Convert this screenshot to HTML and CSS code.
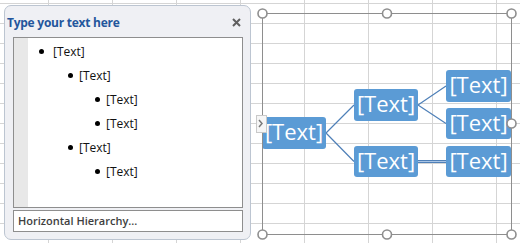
FILE: index.html
```html
<!DOCTYPE html>
<html lang="en">
  <head>
    <meta charset="UTF-8" />
    <title>SmartArt text pane</title>
    <link rel="stylesheet" href="styles.css">
  </head>
  <body>
    <div class="pane">
      <div class="pane-head">
        <span class="pane-title">Type your text here</span>
        <svg class="pane-close" width="9" height="9" viewBox="0 0 9 9">
          <path d="M1 1 L8 8 M8 1 L1 8" stroke="#5f5f5f" stroke-width="2" />
        </svg>
      </div>
      <div class="pane-body">
        <div class="pane-list">
          <div class="gutter"></div>
          <ul class="bullets">
            <li class="lvl1">[Text]</li>
            <li class="lvl2">[Text]</li>
            <li class="lvl3">[Text]</li>
            <li class="lvl3">[Text]</li>
            <li class="lvl2">[Text]</li>
            <li class="lvl3">[Text]</li>
          </ul>
        </div>
        <div class="pane-foot">Horizontal Hierarchy...</div>
      </div>
    </div>

    <svg class="diagram" width="269" height="243" viewBox="251 0 269 243">
      <!-- connectors -->
      <g class="links">
        <path d="M326 133 L354 105 M326 133 L354 161.5" />
        <path d="M418 105 L446 86 M418 105 L446 123.5" />
        <path d="M418 160.5 L446 160.5 M418 162.5 L446 162.5" />
      </g>
      <path class="link-fill" d="M418 161.5 L446 161.5" />

      <!-- nodes -->
      <g class="node">
        <rect x="262" y="117" width="64" height="32" rx="3" />
        <text x="294" y="140">[Text]</text>
      </g>
      <g class="node">
        <rect x="354" y="89" width="64" height="32" rx="3" />
        <text x="386" y="112">[Text]</text>
      </g>
      <g class="node">
        <rect x="354" y="146" width="64" height="31" rx="3" />
        <text x="386" y="169">[Text]</text>
      </g>
      <g class="node">
        <rect x="446" y="70" width="65" height="32" rx="3" />
        <text x="478.5" y="93">[Text]</text>
      </g>
      <g class="node">
        <rect x="446" y="108" width="65" height="31" rx="3" />
        <text x="478.5" y="131">[Text]</text>
      </g>
      <g class="node">
        <rect x="446" y="146" width="65" height="31" rx="3" />
        <text x="478.5" y="169">[Text]</text>
      </g>

      <!-- selection frame -->
      <rect class="frame" x="262.5" y="13.5" width="249" height="221" />
      <g class="handle">
        <circle cx="262.5" cy="13.5" r="4.5" />
        <circle cx="387" cy="13.5" r="4.5" />
        <circle cx="511.5" cy="13.5" r="4.5" />
        <circle cx="511.5" cy="123.5" r="4.5" />
        <circle cx="262.5" cy="234.5" r="4.5" />
        <circle cx="387" cy="234.5" r="4.5" />
        <circle cx="511.5" cy="234.5" r="4.5" />
      </g>

      <!-- text pane toggle -->
      <rect class="tab" x="256.5" y="115.5" width="10" height="17" />
      <path class="tab-arrow" d="M259 120 L262 123.5 L259 127" />
    </svg>
  </body>
</html>
```

FILE: styles.css
```css
* {
  box-sizing: border-box;
}

body {
  margin: 0;
  width: 520px;
  height: 243px;
  overflow: hidden;
  display: flex;
  align-items: flex-start;
  font-family: "Open Sans", "Noto Sans", sans-serif;
  background-color: #fff;
  background-image:
    linear-gradient(to right, #d5d5d5 1px, transparent 1px),
    linear-gradient(to bottom, #d5d5d5 1px, transparent 1px);
  background-size: 64px 100%, 100% 20px;
  background-position: 48px 0, 0 3px;
}

.pane {
  flex: none;
  width: 247px;
  height: 235px;
  margin: 5px 0 0 4px;
  background: #eff0f4;
  border: 1px solid #bcc5d1;
  border-radius: 7px;
}

.pane-head {
  height: 31px;
  display: flex;
  align-items: center;
  justify-content: space-between;
  padding: 1px 9px 0 2px;
}

.pane-title {
  font-size: 12px;
  font-weight: 700;
  letter-spacing: -0.25px;
  color: #24569c;
}

.pane-body {
  padding: 0 7px 0 8px;
}

.pane-list {
  height: 171px;
  display: flex;
  background: #fff;
  border: 1px solid #8e8e8e;
}

.gutter {
  width: 14px;
  background: #e8e8e8;
}

.bullets {
  flex: 1;
  list-style: none;
  margin: 0;
  padding: 1px 0 0 0;
}

.bullets li {
  height: 24px;
  display: flex;
  align-items: center;
  font-size: 12px;
  color: #111;
}

.bullets li::before {
  content: "";
  width: 5px;
  height: 5px;
  border-radius: 50%;
  background: #000;
}

.bullets .lvl1 {
  padding-left: 11px;
}

.bullets .lvl1::before {
  margin-right: 9px;
}

.bullets .lvl2 {
  padding-left: 40px;
}

.bullets .lvl3 {
  padding-left: 67px;
}

.bullets .lvl2::before,
.bullets .lvl3::before {
  margin-right: 6px;
}

.pane-foot {
  height: 22px;
  margin-top: 2px;
  padding-left: 4px;
  line-height: 20px;
  font-size: 11px;
  font-weight: 600;
  color: #3e3e3e;
  background: #fff;
  border: 1px solid #8e8e8e;
}

.diagram {
  flex: none;
  display: block;
}

.links path {
  stroke: #4f80b8;
  stroke-width: 1.2;
  fill: none;
}

.link-fill {
  stroke: #a9c4e4;
  stroke-width: 1;
}

.node rect {
  fill: #5b9bd5;
}

.node text {
  font-family: "Open Sans", "Noto Sans", sans-serif;
  font-size: 22px;
  fill: #fff;
  text-anchor: middle;
}

.frame {
  fill: none;
  stroke: #8e8e8e;
  stroke-width: 1;
}

.handle circle {
  fill: #fff;
  stroke: #8e8e8e;
  stroke-width: 1.6;
}

.tab {
  fill: #f6f6f6;
  stroke: #c9c9c9;
  stroke-width: 1;
}

.tab-arrow {
  fill: none;
  stroke: #7a7a7a;
  stroke-width: 1.5;
}
```
